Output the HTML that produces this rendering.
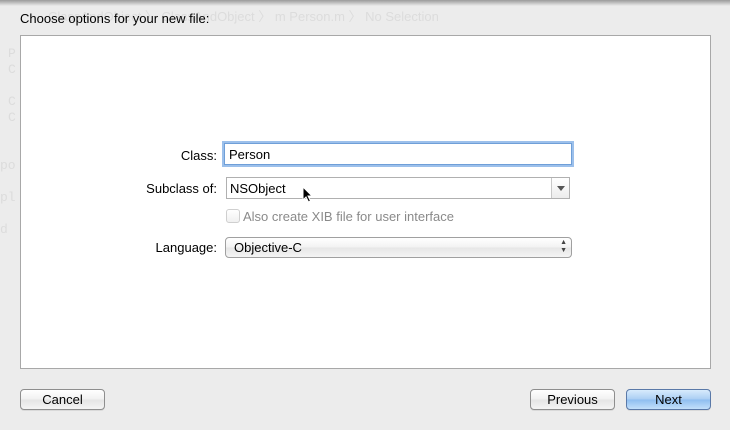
<!DOCTYPE html>
<html><head><style>
body{margin:0;width:730px;height:430px;background:#ececec;position:relative;overflow:hidden;font-family:"Liberation Sans",sans-serif;font-size:13px;color:#000}
.a{position:absolute}
.ghost{color:#dcdcdc;font-size:13px}
.lbl{position:absolute;text-align:right;width:120px;left:97px}
.btn{position:absolute;top:389px;height:19px;border:1px solid #8e8e8e;border-radius:4px;background:linear-gradient(#fff,#f1f1f1 50%,#e4e4e4 51%,#f4f4f4);text-align:center;line-height:19px;font-size:13px;box-shadow:0 1px 0 rgba(0,0,0,.08)}
</style></head><body>
<div class="a" style="left:0;top:0;width:730px;height:6px;background:linear-gradient(#9a9a9a,#ececec)"></div>
<div class="a ghost" style="left:48px;top:6px">ClassAndObject 〉 ClassAndObject 〉 m Person.m 〉 No Selection</div>
<div class="a ghost" style="left:8px;top:46px;line-height:16px;font-family:'Liberation Mono',monospace">P<br>C<br><br>C<br>C</div>
<div class="a ghost" style="left:0;top:158px;font-family:'Liberation Mono',monospace">po</div>
<div class="a ghost" style="left:0;top:190px;font-family:'Liberation Mono',monospace">pl</div>
<div class="a ghost" style="left:0;top:222px;font-family:'Liberation Mono',monospace">d</div>
<div class="a" style="left:20px;top:11px;font-size:13px">Choose options for your new file:</div>
<div class="a" style="left:20px;top:35px;width:689px;height:332px;background:#fff;border:1px solid #a8a8a8"></div>
<div class="lbl" style="top:148px">Class:</div>
<div class="a" style="left:224px;top:143px;width:346px;height:20px;border:1px solid #6f9fd8;box-shadow:0 0 0 2px #9cc0eb;background:#fff"><span style="position:absolute;left:4px;top:3px">Person</span></div>
<div class="lbl" style="top:181px">Subclass of:</div>
<div class="a" style="left:226px;top:177px;width:342px;height:20px;border:1px solid #b0b0b0;background:#fff"><span style="position:absolute;left:3px;top:3px">NSObject</span><div style="position:absolute;right:0;top:0;width:17px;height:20px;border-left:1px solid #c8c8c8;background:linear-gradient(#fff,#ececec)"><div style="position:absolute;left:5px;top:8px;border-left:4px solid transparent;border-right:4px solid transparent;border-top:5px solid #555"></div></div></div>
<svg class="a" style="left:302px;top:186px" width="12" height="18" viewBox="0 0 12 18"><path d="M1 1 L1 14 L4 11 L6.5 16 L8.5 15 L6 10 L10 10 Z" fill="#000" stroke="#fff" stroke-width="1"/></svg>
<div class="a" style="left:226px;top:209px;width:12px;height:12px;border:1px solid #cfcfcf;border-radius:3px;background:linear-gradient(#fff,#f0f0f0)"></div>
<div class="a" style="left:243px;top:209px;color:#8a8a8a">Also create XIB file for user interface</div>
<div class="lbl" style="top:240px">Language:</div>
<div class="a" style="left:225px;top:237px;width:345px;height:19px;border:1px solid #a0a0a0;border-radius:4px;background:linear-gradient(#fff,#f2f2f2 50%,#e6e6e6 51%,#f4f4f4)"><span style="position:absolute;left:8px;top:2px">Objective-C</span><span style="position:absolute;right:4px;top:1px;font-size:7px;line-height:8px;color:#444">▲<br>▼</span></div>
<div class="btn" style="left:20px;width:83px">Cancel</div>
<div class="btn" style="left:530px;width:83px">Previous</div>
<div class="btn" style="left:626px;width:83px;border-color:#5a79a8;background:linear-gradient(#d8ebfd,#a9cdf3 50%,#8dbdf0 51%,#c3e0fb)">Next</div>
</body></html>
